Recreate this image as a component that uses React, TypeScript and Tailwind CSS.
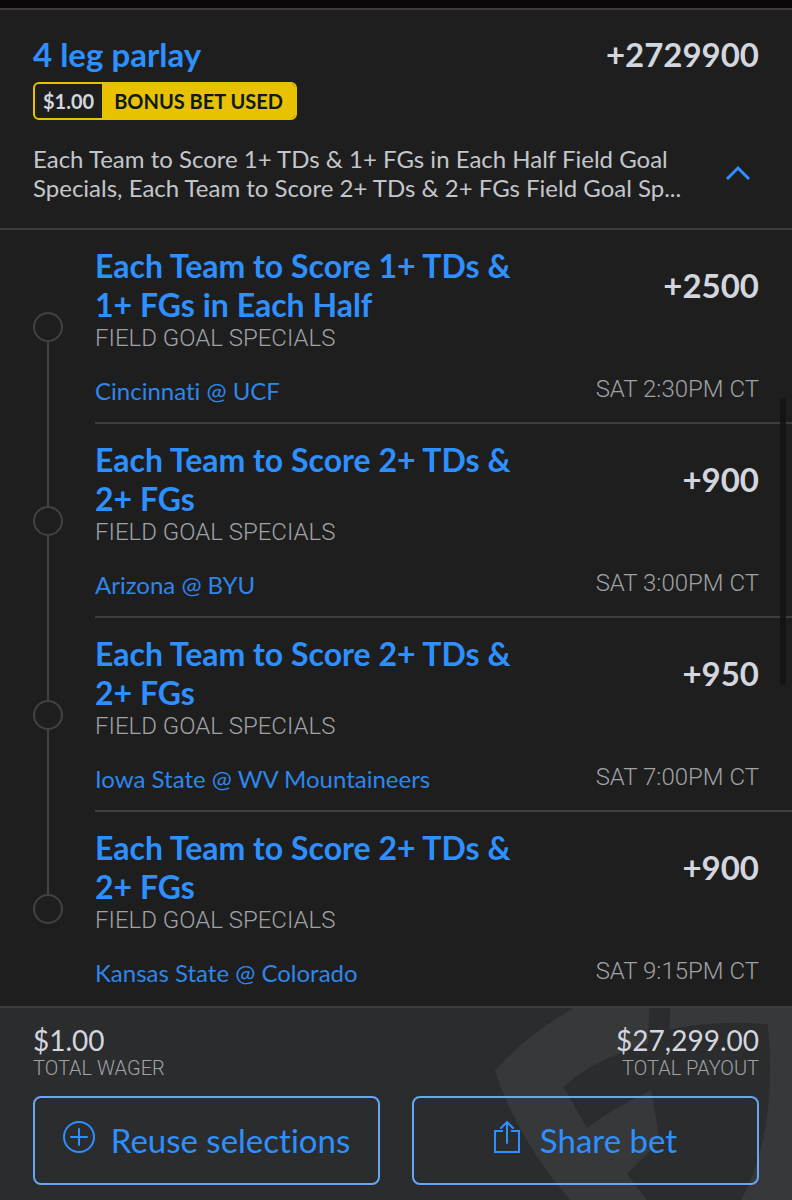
import * as React from "react"
import { useState } from "react"

interface Leg {
  title: string[]
  market: string
  matchup: string
  odds: string
  time: string
}

const legs: Leg[] = [
  {
    title: ["Each Team to Score 1+ TDs &", "1+ FGs in Each Half"],
    market: "FIELD GOAL SPECIALS",
    matchup: "Cincinnati @ UCF",
    odds: "+2500",
    time: "SAT 2:30PM CT",
  },
  {
    title: ["Each Team to Score 2+ TDs &", "2+ FGs"],
    market: "FIELD GOAL SPECIALS",
    matchup: "Arizona @ BYU",
    odds: "+900",
    time: "SAT 3:00PM CT",
  },
  {
    title: ["Each Team to Score 2+ TDs &", "2+ FGs"],
    market: "FIELD GOAL SPECIALS",
    matchup: "Iowa State @ WV Mountaineers",
    odds: "+950",
    time: "SAT 7:00PM CT",
  },
  {
    title: ["Each Team to Score 2+ TDs &", "2+ FGs"],
    market: "FIELD GOAL SPECIALS",
    matchup: "Kansas State @ Colorado",
    odds: "+900",
    time: "SAT 9:15PM CT",
  },
]

function ShieldMark() {
  return (
    <svg
      aria-hidden="true"
      viewBox="300 51 900 579"
      className="absolute right-0 top-0 h-[193px] w-[300px]"
    >
      <path
        fill="#373839"
        fillRule="evenodd"
        d="M548 50Q405 128 308 240Q385 460 540 632H1200V50H835L832 116Q975 86 1127 100Q1160 420 1045 632H768L705 548L803 450L778 298Q670 348 585 410L515 288Q605 204 768 158L772 50Z"
      />
    </svg>
  )
}

function PlusCircleIcon() {
  return (
    <svg viewBox="0 0 32 32" fill="none" stroke="currentColor" strokeWidth="2" className="mb-2 size-8">
      <circle cx="16" cy="16" r="15" />
      <path d="M16 8v16M8 16h16" strokeLinecap="round" />
    </svg>
  )
}

function ShareIcon() {
  return (
    <svg viewBox="0 0 26 32" fill="none" stroke="currentColor" strokeWidth="2" className="mb-2 h-8 w-[26px]">
      <path d="M9 10H1V31H25V10H17" />
      <path d="M13 22V1M7 7L13 1L19 7" strokeLinecap="round" />
    </svg>
  )
}

function LegRow({ leg, first, last }: { leg: Leg; first: boolean; last: boolean }) {
  return (
    <li className="flex gap-8 pl-[33px]">
      <div className="flex w-[30px] shrink-0 flex-col items-center">
        <div className={`w-[2px] flex-1 ${first ? "" : "bg-[#414243]"}`} />
        <div className="size-[30px] rounded-full border-2 border-[#414243]" />
        <div className={`w-[2px] flex-1 ${last ? "" : "bg-[#414243]"}`} />
      </div>
      <div
        className={`flex-1 border-b-2 pb-4 pr-[33px] pt-4 ${last ? "border-transparent" : "border-[#3d3e3f]"}`}
      >
        <div className="flex items-center justify-between">
          <h3 className="text-[32px] font-bold leading-[39px] text-[#2e90ff]">
            {leg.title.map((line) => (
              <span key={line} className="block">{line}</span>
            ))}
          </h3>
          <span className="text-[33px] font-bold leading-[39px] text-[#d3d6de]">{leg.odds}</span>
        </div>
        <p className="font-[Roboto,sans-serif] text-[24px] font-light leading-7 text-[#a0a2a6]">{leg.market}</p>
        <div className="mt-6 flex items-start justify-between">
          <a href="#" className="text-[24px] leading-[30px] text-[#2f86ea]">{leg.matchup}</a>
          <time className="font-[Roboto,sans-serif] text-[24px] font-light leading-[26px] text-[#a0a2a6]">{leg.time}</time>
        </div>
      </div>
    </li>
  )
}

export default function App() {
  const [expanded, setExpanded] = useState(true)

  return (
    <div className="flex min-h-screen flex-col border-t-8 border-[#0b0809] bg-[#1e1e1e] font-[Lato,sans-serif] [font-variant-ligatures:none]">
      <header className="border-y-2 border-[#3b3c3d] px-[33px] pb-[26px] pt-6">
        <div className="flex items-center justify-between">
          <h2 className="text-[33px] font-bold leading-10 text-[#2e90ff]">4 leg parlay</h2>
          <span className="text-[33px] font-bold leading-10 text-[#d3d6de]">+2729900</span>
        </div>
        <div className="mt-2 flex h-[38px] w-fit items-stretch overflow-hidden rounded-md border-2 border-[#e8c200] text-[20px] font-bold leading-[34px]">
          <span className="px-2 text-[#d3d6de]">$1.00</span>
          <span className="bg-[#e8c200] px-3 text-[#0c1a1c]">BONUS BET USED</span>
        </div>
        <div className="mt-6 flex items-center justify-between">
          <p className="text-[24px] leading-[29px] text-[#c4c6cb]">
            Each Team to Score 1+ TDs &amp; 1+ FGs in Each Half Field Goal
            <br />
            Specials, Each Team to Score 2+ TDs &amp; 2+ FGs Field Goal Sp...
          </p>
          <button
            type="button"
            aria-label="Toggle legs"
            aria-expanded={expanded}
            onClick={() => setExpanded(!expanded)}
            className="p-2 text-[#2e90ff]"
          >
            <svg viewBox="0 0 26 16" fill="none" stroke="currentColor" strokeWidth="3" className="h-4 w-[26px]">
              <path d="M2 14L13 3L24 14" />
            </svg>
          </button>
        </div>
      </header>

      {expanded && (
        <main className="relative">
          <ul>
            {legs.map((leg, i) => (
              <LegRow key={leg.matchup} leg={leg} first={i === 0} last={i === legs.length - 1} />
            ))}
          </ul>
          <div className="absolute right-[6px] top-[168px] h-[287px] w-[6px] rounded-full bg-[#131313]/90" />
        </main>
      )}

      <footer className="relative flex-1 overflow-hidden border-t-2 border-[#3b3c3f] bg-[#2b2c2d] px-[33px] pb-3 pt-4">
        <ShieldMark />
        <dl className="relative flex justify-between">
          <div className="flex flex-col-reverse">
            <dt className="font-[Roboto,sans-serif] text-[20px] font-light leading-6 text-[#a0a2a6]">TOTAL WAGER</dt>
            <dd className="text-[28px] leading-8 text-[#d3d6de]">$1.00</dd>
          </div>
          <div className="flex flex-col-reverse text-right">
            <dt className="font-[Roboto,sans-serif] text-[20px] font-light leading-6 text-[#a0a2a6]">TOTAL PAYOUT</dt>
            <dd className="text-[28px] leading-8 text-[#d3d6de]">$27,299.00</dd>
          </div>
        </dl>
        <div className="relative mt-4 grid grid-cols-2 gap-8 text-[33px] text-[#2e90ff]">
          <button type="button" className="flex h-[89px] items-center justify-center gap-4 rounded-lg border-2 border-[#66a6f5]">
            <PlusCircleIcon />
            Reuse selections
          </button>
          <button type="button" className="flex h-[89px] items-center justify-center gap-5 rounded-lg border-2 border-[#66a6f5]">
            <ShareIcon />
            Share bet
          </button>
        </div>
      </footer>
    </div>
  )
}
